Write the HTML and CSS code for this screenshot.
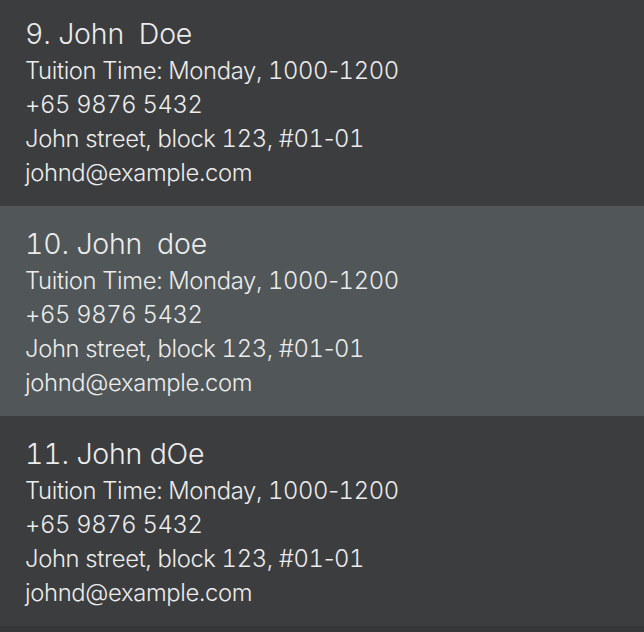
FILE: index.html
```html
<!DOCTYPE html>
<html>
<head>
<meta charset="utf-8">
<link rel="stylesheet" href="styles.css">
</head>
<body>
<div class="list">
  <div class="card">
    <div class="name">9. John  Doe</div>
    <div class="line">Tuition Time: Monday, 1000<span class="dash">-</span>1200</div>
    <div class="line">+65 9876 5432</div>
    <div class="line">John street, block 123, #01<span class="dash">-</span>01</div>
    <div class="line">johnd@example.com</div>
  </div>
  <div class="card selected">
    <div class="name">10. John  doe</div>
    <div class="line">Tuition Time: Monday, 1000<span class="dash">-</span>1200</div>
    <div class="line">+65 9876 5432</div>
    <div class="line">John street, block 123, #01<span class="dash">-</span>01</div>
    <div class="line">johnd@example.com</div>
  </div>
  <div class="card">
    <div class="name">11. John dOe</div>
    <div class="line">Tuition Time: Monday, 1000<span class="dash">-</span>1200</div>
    <div class="line">+65 9876 5432</div>
    <div class="line">John street, block 123, #01<span class="dash">-</span>01</div>
    <div class="line">johnd@example.com</div>
  </div>
</div>
</body>
</html>
```
FILE: styles.css
```css
html, body {
  margin: 0;
  padding: 0;
  background: #363738;
  overflow: hidden;
  height: 632px;
}
.list {
  margin-top: -4px;
  display: flex;
  flex-direction: column;
}
.card {
  height: 210px;
  box-sizing: border-box;
  padding: 18px 0 0 25px;
  background: #3c3d3f;
  color: #ececec;
  font-family: Inter, "Noto Sans", sans-serif;
  font-weight: 300;
  font-variant-numeric: tabular-nums;
}
.card.selected {
  background: #515658;
}
.name {
  font-size: 28.5px;
  line-height: 40px;
  white-space: pre;
  letter-spacing: -0.2px;
}
.line {
  font-size: 23.8px;
  line-height: 34px;
  letter-spacing: -0.35px;
}
.dash {
  font-variant-numeric: normal;
}
```
